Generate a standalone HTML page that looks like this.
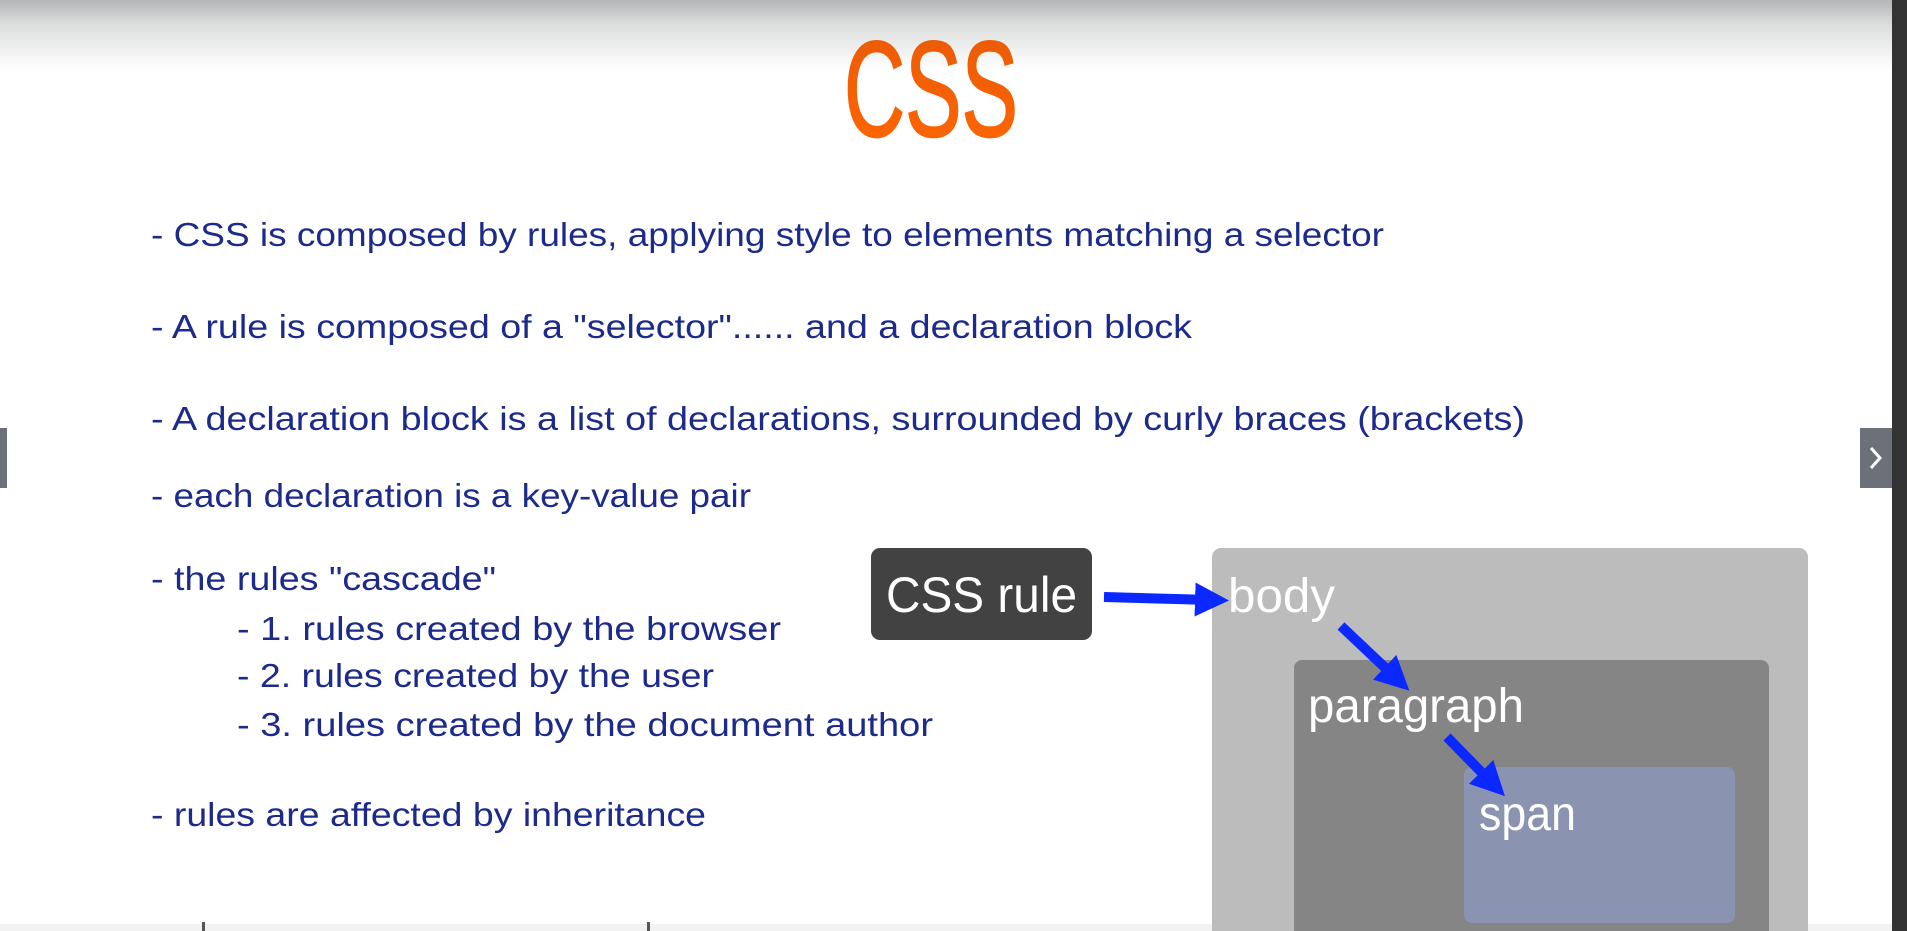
<!DOCTYPE html>
<html><head><meta charset="utf-8"><style>
html,body{margin:0;padding:0;width:1907px;height:931px;overflow:hidden;background:#fff}
svg{display:block}
</style></head><body>
<svg width="1907" height="931" viewBox="0 0 1907 931" xmlns="http://www.w3.org/2000/svg">
<defs>
<linearGradient id="top" x1="0" y1="0" x2="0" y2="1">
<stop offset="0" stop-color="#b4b5b7"/><stop offset="0.35" stop-color="#dcdddd"/><stop offset="1" stop-color="#ffffff"/>
</linearGradient>
<linearGradient id="or" x1="0" y1="0" x2="0" y2="1">
<stop offset="0" stop-color="#e85a08"/><stop offset="1" stop-color="#ff6600"/>
</linearGradient>
<marker id="ah" markerWidth="3.4" markerHeight="3.4" refX="1.7" refY="1.7" orient="auto" markerUnits="strokeWidth">
<path d="M0,0 L3.4,1.7 L0,3.4 Z" fill="#0a28ff"/>
</marker>
</defs>
<rect x="0" y="0" width="1907" height="70" fill="url(#top)"/>
<rect x="0" y="924" width="1892" height="7" fill="#f2f2f2"/>
<rect x="202" y="922" width="3" height="9" fill="#555"/>
<rect x="647" y="922" width="3" height="9" fill="#555"/>
<text x="931" y="136" text-anchor="middle" font-family="Liberation Sans Narrow, Liberation Sans, sans-serif" font-size="136" fill="url(#or)" textLength="174" lengthAdjust="spacingAndGlyphs" stroke="url(#or)" stroke-width="2">CSS</text>
<g font-family="Liberation Sans, sans-serif" font-size="33" fill="#1c2a8c">
<text x="151" y="246" textLength="1233" lengthAdjust="spacingAndGlyphs">- CSS is composed by rules, applying style to elements matching a selector</text>
<text x="151" y="338" textLength="1041" lengthAdjust="spacingAndGlyphs">- A rule is composed of a "selector"...... and a declaration block</text>
<text x="151" y="430" textLength="1374" lengthAdjust="spacingAndGlyphs">- A declaration block is a list of declarations, surrounded by curly braces (brackets)</text>
<text x="151" y="507" textLength="600" lengthAdjust="spacingAndGlyphs">- each declaration is a key-value pair</text>
<text x="151" y="590" textLength="345" lengthAdjust="spacingAndGlyphs">- the rules "cascade"</text>
<text x="237" y="640" textLength="544" lengthAdjust="spacingAndGlyphs">- 1. rules created by the browser</text>
<text x="237" y="687" textLength="477" lengthAdjust="spacingAndGlyphs">- 2. rules created by the user</text>
<text x="237" y="736" textLength="696" lengthAdjust="spacingAndGlyphs">- 3. rules created by the document author</text>
<text x="151" y="826" textLength="555" lengthAdjust="spacingAndGlyphs">- rules are affected by inheritance</text>
</g>
<rect x="1212" y="548" width="596" height="400" rx="9" fill="#bcbcbc"/>
<rect x="1294" y="660" width="475" height="290" rx="8" fill="#858585"/>
<rect x="1464" y="767" width="271" height="156" rx="8" fill="#8a93b0"/>
<rect x="871" y="548" width="221" height="92" rx="9" fill="#424242"/>
<g font-family="Liberation Sans, sans-serif" fill="#fff">
<text x="886" y="612" font-size="50" textLength="191" lengthAdjust="spacingAndGlyphs">CSS rule</text>
<text x="1228" y="612" font-size="48" textLength="107" lengthAdjust="spacingAndGlyphs">body</text>
<text x="1308" y="722" font-size="48" textLength="216" lengthAdjust="spacingAndGlyphs">paragraph</text>
<text x="1479" y="830" font-size="48" textLength="97" lengthAdjust="spacingAndGlyphs">span</text>
</g>
<g stroke="#0a28ff" stroke-width="10" fill="none" marker-end="url(#ah)">
<line x1="1104" y1="597" x2="1212" y2="600"/>
<line x1="1341" y1="626" x2="1397" y2="679"/>
<line x1="1447" y1="737" x2="1493" y2="784"/>
</g>
<rect x="1892" y="0" width="15" height="931" fill="#333"/>
<rect x="1860" y="428" width="32" height="60" fill="#6b7079"/>
<path d="M1871,448 L1880,458 L1871,468" stroke="#fff" stroke-width="3" fill="none"/>
<rect x="0" y="428" width="7" height="60" fill="#6b7079"/>
</svg>
</body></html>
